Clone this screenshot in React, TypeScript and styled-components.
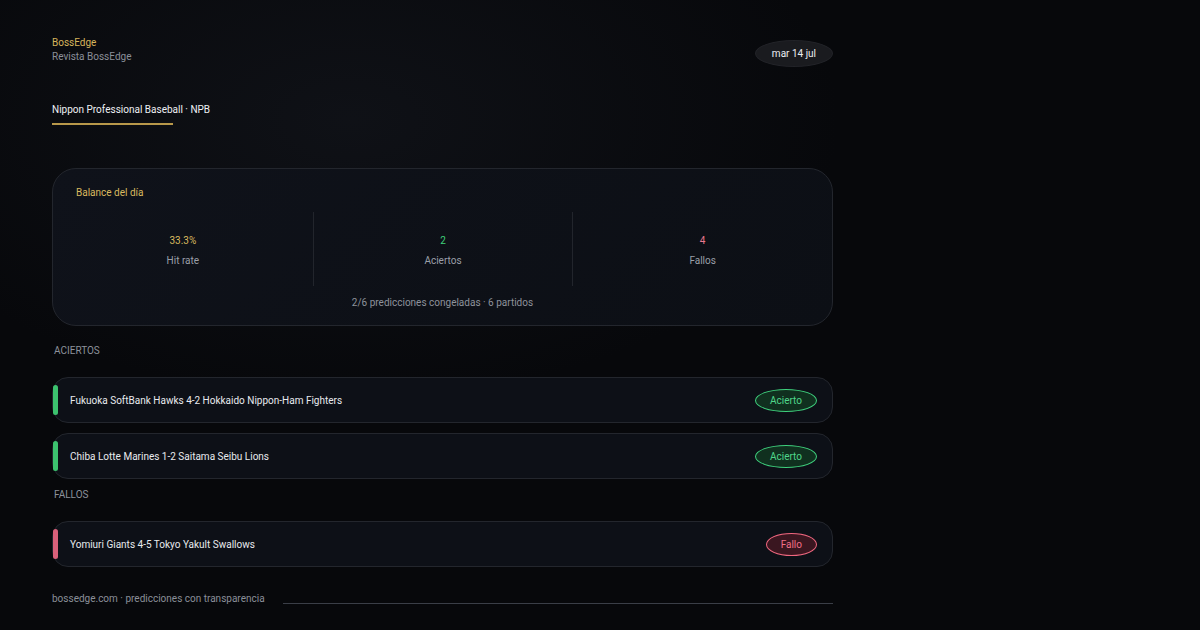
import React from "react";
import styled, { createGlobalStyle } from "styled-components";

type game = {
  id: string;
  title: string;
  hit: boolean;
};

const games: game[] = [
  { id: "g1", title: "Fukuoka SoftBank Hawks 4-2 Hokkaido Nippon-Ham Fighters", hit: true },
  { id: "g2", title: "Chiba Lotte Marines 1-2 Saitama Seibu Lions", hit: true },
  { id: "g3", title: "Yomiuri Giants 4-5 Tokyo Yakult Swallows", hit: false },
];

const Global = createGlobalStyle`
  html, body {
    margin: 0;
    padding: 0;
    background: #07080b;
  }
  body {
    font-family: Roboto, "Liberation Sans", sans-serif;
    -webkit-font-smoothing: antialiased;
  }
`;

const App: React.FC = () => {
  const hits = games.filter((g) => g.hit);
  const misses = games.filter((g) => !g.hit);

  return (
    <Page>
      <Global />
      <Container>
        <Header>
          <Brand>
            <BrandName>BossEdge</BrandName>
            <BrandSub>Revista BossEdge</BrandSub>
          </Brand>
          <DatePill>mar 14 jul</DatePill>
        </Header>

        <Tabs>
          <Tab>Nippon Professional Baseball · NPB</Tab>
        </Tabs>

        <Card>
          <CardTitle>Balance del día</CardTitle>
          <Stats>
            <Stat>
              <StatValue color="#d9b95f">33.3%</StatValue>
              <StatLabel>Hit rate</StatLabel>
            </Stat>
            <Stat>
              <StatValue color="#3fcf7a">2</StatValue>
              <StatLabel>Aciertos</StatLabel>
            </Stat>
            <Stat>
              <StatValue color="#e8798f">4</StatValue>
              <StatLabel>Fallos</StatLabel>
            </Stat>
          </Stats>
          <CardFoot>2/6 predicciones congeladas · 6 partidos</CardFoot>
        </Card>

        <SectionTitle gap={19}>Aciertos</SectionTitle>
        <List>
          {hits.map((g) => (
            <Row key={g.id}>
              <Bar hit />
              <RowText>{g.title}</RowText>
              <Badge hit>Acierto</Badge>
            </Row>
          ))}
        </List>

        <SectionTitle gap={10}>Fallos</SectionTitle>
        <List>
          {misses.map((g) => (
            <Row key={g.id}>
              <Bar hit={false} />
              <RowText>{g.title}</RowText>
              <Badge hit={false}>Fallo</Badge>
            </Row>
          ))}
        </List>

        <Footer>
          <FootText>bossedge.com · predicciones con transparencia</FootText>
          <FootLine />
        </Footer>
      </Container>
    </Page>
  );
};

export default App;

const Page = styled.div`
  width: 1200px;
  height: 630px;
  overflow: hidden;
  background: radial-gradient(
      ellipse 700px 400px at 350px 120px,
      rgba(30, 34, 44, 0.35),
      rgba(7, 8, 11, 0) 70%
    ),
    #07080b;
`;

const Container = styled.div`
  width: 781px;
  padding: 36px 0 0 52px;
  display: flex;
  flex-direction: column;
`;

const Header = styled.div`
  display: flex;
  justify-content: space-between;
  align-items: flex-start;
`;

const Brand = styled.div`
  display: flex;
  flex-direction: column;
  gap: 2px;
  padding-top: 1px;
`;

const BrandName = styled.span`
  color: #d6b45c;
  font-size: 10px;
  line-height: 12px;
`;

const BrandSub = styled.span`
  color: #8a8f99;
  font-size: 10px;
  line-height: 12px;
`;

const DatePill = styled.div`
  background: #1a1b1f;
  border: 1px solid #222328;
  color: #eceef2;
  font-size: 10px;
  padding: 0 16px;
  height: 27px;
  box-sizing: border-box;
  display: flex;
  align-items: center;
  border-radius: 50%;
  margin-top: 4px;
`;

const Tabs = styled.div`
  display: flex;
  margin-top: 37px;
`;

const Tab = styled.div`
  color: #eef0f4;
  font-size: 10px;
  line-height: 12px;
  padding-bottom: 7px;
  position: relative;
  &::after {
    content: "";
    position: absolute;
    left: 0;
    bottom: -2px;
    width: 121px;
    height: 2px;
    background: #b8984a;
  }
`;

const Card = styled.div`
  margin-top: 45px;
  background: linear-gradient(135deg, #0f121a, #0c0f15);
  border: 1px solid #23262d;
  border-radius: 24px;
  padding: 18px 0 16px;
  display: flex;
  flex-direction: column;
`;

const CardTitle = styled.div`
  color: #d9b95f;
  font-size: 10px;
  line-height: 12px;
  padding-left: 23px;
`;

const Stats = styled.div`
  display: grid;
  grid-template-columns: repeat(3, 1fr);
  margin-top: 13px;
`;

const Stat = styled.div`
  height: 74px;
  display: flex;
  flex-direction: column;
  align-items: center;
  justify-content: center;
  gap: 8px;
  padding-top: 3px;
  box-sizing: border-box;
  & + & {
    border-left: 1px solid #22252c;
  }
`;

const StatValue = styled.span<{ color: string }>`
  color: ${({ color }) => color};
  font-size: 10px;
  line-height: 12px;
`;

const StatLabel = styled.span`
  color: #9a9fa8;
  font-size: 10px;
  line-height: 12px;
`;

const CardFoot = styled.div`
  text-align: center;
  color: #8d929b;
  font-size: 10px;
  line-height: 12px;
  margin-top: 11px;
`;

const SectionTitle = styled.div<{ gap: number }>`
  color: #8d929b;
  font-size: 10px;
  line-height: 12px;
  text-transform: uppercase;
  margin: ${({ gap }) => gap}px 0 0 2px;
`;

const List = styled.div`
  display: flex;
  flex-direction: column;
  gap: 10px;
  margin-top: 20px;
`;

const Row = styled.div`
  height: 46px;
  box-sizing: border-box;
  background: #0d1017;
  border: 1px solid #23262d;
  border-radius: 16px;
  display: flex;
  align-items: center;
  padding: 0 15px 0 0;
`;

const Bar = styled.div<{ hit: boolean }>`
  width: 5px;
  height: 30px;
  border-radius: 3px;
  background: ${({ hit }) => (hit ? "#3cc26e" : "#d9607a")};
`;

const RowText = styled.span`
  flex: 1;
  color: #e8eaee;
  font-size: 10px;
  margin-left: 12px;
`;

const Badge = styled.span<{ hit: boolean }>`
  font-size: 10px;
  height: 23px;
  box-sizing: border-box;
  display: flex;
  align-items: center;
  padding: 0 14px;
  border-radius: 50%;
  color: ${({ hit }) => (hit ? "#4fd68a" : "#f07088")};
  background: ${({ hit }) => (hit ? "#10301f" : "#3a1620")};
  border: 1px solid ${({ hit }) => (hit ? "#3fd07d" : "#f0677f")};
`;

const Footer = styled.div`
  display: flex;
  align-items: center;
  gap: 18px;
  margin-top: 26px;
`;

const FootText = styled.span`
  color: #8a8f99;
  font-size: 10px;
  line-height: 12px;
  white-space: nowrap;
`;

const FootLine = styled.div`
  flex: 1;
  height: 1px;
  background: #3a3e47;
  margin-top: 8px;
`;
